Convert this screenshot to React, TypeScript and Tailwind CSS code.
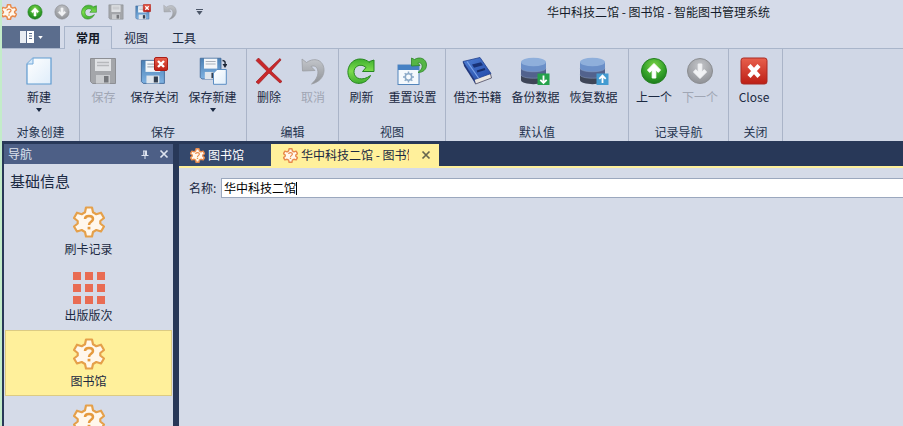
import type { ReactNode } from "react";
import { useState } from "react";

type IconProps = { className?: string };

function Gradients() {
  return (
    <svg className="absolute size-0" aria-hidden="true">
      <defs>
        <radialGradient id="greenBall" cx="0.5" cy="0.3" r="0.7">
          <stop offset="0" stopColor="#7fd447" />
          <stop offset="0.6" stopColor="#35a32a" />
          <stop offset="1" stopColor="#1d7d1c" />
        </radialGradient>
        <radialGradient id="grayBall" cx="0.5" cy="0.3" r="0.7">
          <stop offset="0" stopColor="#c4c6ca" />
          <stop offset="1" stopColor="#8f9196" />
        </radialGradient>
        <linearGradient id="greenArrow" x1="0" y1="0" x2="0" y2="1">
          <stop offset="0" stopColor="#3fb02f" />
          <stop offset="0.5" stopColor="#7cdc4c" />
          <stop offset="1" stopColor="#3fae30" />
        </linearGradient>
        <linearGradient id="redBox" x1="0" y1="0" x2="0" y2="1">
          <stop offset="0" stopColor="#e8604c" />
          <stop offset="1" stopColor="#bd1f16" />
        </linearGradient>
        <linearGradient id="blueDisk" x1="0" y1="0" x2="0" y2="1">
          <stop offset="0" stopColor="#4b80b4" />
          <stop offset="1" stopColor="#7fb2e2" />
        </linearGradient>
        <linearGradient id="paper" x1="0" y1="0" x2="1" y2="1">
          <stop offset="0" stopColor="#ffffff" />
          <stop offset="1" stopColor="#dfedfa" />
        </linearGradient>
        <linearGradient id="undoGray" x1="0" y1="0" x2="0" y2="1">
          <stop offset="0" stopColor="#c3c6cb" />
          <stop offset="1" stopColor="#8f9297" />
        </linearGradient>
        <linearGradient id="bookBlue" x1="0" y1="0" x2="1" y2="1">
          <stop offset="0" stopColor="#4f80d6" />
          <stop offset="1" stopColor="#2348a6" />
        </linearGradient>
      </defs>
    </svg>
  );
}

function Ball({ className, up, muted }: IconProps & { up?: boolean; muted?: boolean }) {
  return (
    <svg viewBox="0 0 28 28" className={className}>
      <circle cx="14" cy="14" r="12.5" fill={muted ? "url(#grayBall)" : "url(#greenBall)"} stroke={muted ? "#8b8d91" : "#23801f"} />
      <path
        d="M14 6.5 L20.5 13 L18.3 15.4 L15.8 13 V21 H12.2 V13 L9.7 15.4 L7.5 13 Z"
        fill={muted ? "#f1f2f4" : "#fff"}
        stroke={muted ? "#f1f2f4" : "#fff"}
        strokeWidth="1"
        strokeLinejoin="round"
        transform={up ? undefined : "rotate(180 14 14)"}
      />
    </svg>
  );
}

function Refresh({ className }: IconProps) {
  return (
    <svg viewBox="0 0 28 28" className={className}>
      <path
        d="M22.5 4.5 L27 3 V14.5 H15.5 L19 10.5 C14 5.8 6.5 9 7 15.5 C7.5 22 15.5 24.5 23.5 18.5 C19.5 27.5 8 29 3 22 C-2.5 13.5 3.5 2 13 2 C17 2 20 3.3 22.5 5.5 Z"
        fill="url(#greenArrow)"
        stroke="#26861f"
        strokeWidth="1"
        strokeLinejoin="round"
      />
    </svg>
  );
}

function DiskShape({ muted }: { muted?: boolean }) {
  return (
    <g>
      <path d="M1.5 1.5 H26.5 V26.5 H3.5 L1.5 24.5 Z" fill={muted ? "#a4a6aa" : "url(#blueDisk)"} stroke={muted ? "#8d8f94" : "#41699a"} />
      <rect x="6" y="2" width="16" height="12" fill={muted ? "#dfe1e4" : "#f3f6f9"} />
      <path d="M8 5.5 H20 M8 8.5 H20" stroke={muted ? "#b6b8bb" : "#a9b1bb"} strokeWidth="1.3" />
      <rect x="7" y="18" width="14" height="8.5" fill={muted ? "#c9cbce" : "#dfe5ec"} />
      <rect x="15" y="19" width="4.5" height="6.5" fill={muted ? "#75777b" : "#333f50"} />
    </g>
  );
}

function Disk({ className, muted }: IconProps & { muted?: boolean }) {
  return (
    <svg viewBox="0 0 28 28" className={className}>
      <DiskShape muted={muted} />
    </svg>
  );
}

function DiskClose({ className }: IconProps) {
  return (
    <svg viewBox="0 0 28 28" className={className}>
      <g transform="translate(0 2) scale(.92)">
        <DiskShape />
      </g>
      <rect x="14.5" y="0.5" width="13" height="13" rx="1.5" fill="url(#redBox)" stroke="#a91d17" />
      <path d="M18 4 L24 10 M24 4 L18 10" stroke="#fff" strokeWidth="2.4" />
    </svg>
  );
}

function DiskNew({ className }: IconProps) {
  return (
    <svg viewBox="0 0 28 28" className={className}>
      <g transform="scale(.83)">
        <DiskShape />
      </g>
      <path d="M18 12.5 H27.3 V27.3 H14.5 V16 Z" fill="url(#paper)" stroke="#5c8ec3" />
      <path d="M23.5 3.5 C26 3.5 26.5 5 26 8" fill="none" stroke="#1d2636" strokeWidth="1.4" />
      <path d="M23.5 7 H28.5 L26 11 Z" fill="#1d2636" />
    </svg>
  );
}

function Paper({ className }: IconProps) {
  return (
    <svg viewBox="0 0 28 28" className={className}>
      <path d="M8 1 H26 V27 H2 V7 Z" fill="url(#paper)" stroke="#5f9bd0" strokeWidth="1.2" />
      <path d="M2 7 H8 V1" fill="#d4e8fa" stroke="#74aadb" />
    </svg>
  );
}

function Undo({ className }: IconProps) {
  return (
    <svg viewBox="0 0 28 28" className={className}>
      <path
        d="M3 2 L7.5 5.5 C17 -1 25.5 4.5 25 14 C24.6 20.5 19.5 25.5 12.5 27 C17.5 22.5 20 17.5 18.5 12.5 C17.3 8.8 14.5 8.5 12 9.5 L16 13.5 L3.5 14 Z"
        fill="url(#undoGray)"
        stroke="#9a9da2"
        strokeWidth="0.8"
        strokeLinejoin="round"
      />
    </svg>
  );
}

function Cross({ className }: IconProps) {
  return (
    <svg viewBox="0 0 28 28" className={className}>
      <path
        d="M3.5 1 L14 11.7 L25 1.5 L26 3 L16 14 L27 24.5 L25 26 L14 16 L3.5 27 L1 25 L11.8 14 L1 3.5 Z"
        fill="#c9272a"
        stroke="#9d1c20"
        strokeWidth="0.7"
        strokeLinejoin="round"
      />
    </svg>
  );
}

function ResetView({ className }: IconProps) {
  return (
    <svg viewBox="0 0 30 28" className={className}>
      <rect x="1" y="8" width="21" height="19.5" fill="#f5f9fd" stroke="#5385bb" />
      <rect x="1" y="8" width="21" height="5" fill="#4681c4" />
      <circle cx="11.5" cy="20" r="3.2" fill="none" stroke="#8ba9c7" strokeWidth="1.5" />
      <path
        d="M11.5 14.5 V16.5 M11.5 23.5 V25.5 M6 20 H8 M15 20 H17 M7.7 16.2 L9 17.5 M14 22.5 L15.3 23.8 M15.3 16.2 L14 17.5 M9 22.5 L7.7 23.8"
        stroke="#8ba9c7"
        strokeWidth="1.5"
      />
      <path
        d="M14.5 1 L17.5 2.5 C23 -1 29.5 2 29.5 8 C29.5 12.5 26 15.5 21 15.5 C25 12.5 26 9.5 24.5 7 C23.5 5.5 22 5.5 20.8 6 L23 8.5 L14.5 9 Z"
        fill="#55b545"
        stroke="#2c8528"
        strokeWidth="0.8"
        strokeLinejoin="round"
      />
    </svg>
  );
}

function Book({ className }: IconProps) {
  return (
    <svg viewBox="0 0 30 28" className={className}>
      <path d="M1 5 L12.5 23.5 L13.5 27 L29.5 21 L28.5 17 Z" fill="#e9e5e1" stroke="#4c4a62" strokeWidth="0.8" />
      <path d="M1 4.5 L18 0.5 L29 16.5 L12.5 22.5 Z" fill="url(#bookBlue)" stroke="#23418d" strokeWidth="0.8" />
      <path d="M1 4.5 L12.5 22.5 L13.5 27 L2 9 Z" fill="#20377e" />
      <path d="M5 4.5 L16.5 21" stroke="#7da4e8" strokeWidth="1.2" />
      <path d="M10 7.5 L19 5.2 L21 8.2 L12 10.7 Z" fill="#193276" />
      <path d="M15 14.5 L23 12" stroke="#162c6b" strokeWidth="2" />
    </svg>
  );
}

function Database({ className, up }: IconProps & { up?: boolean }) {
  return (
    <svg viewBox="0 0 30 28" className={className}>
      <path d="M1 17 V23 C1 28.5 26 28.5 26 23 V17 Z" fill="#3e4557" />
      <path d="M1 11 V17.5 C1 22.5 26 22.5 26 17.5 V11 Z" fill="#52628d" />
      <path d="M1 5 V11 C1 16 26 16 26 11 V5 Z" fill="#6b8fc8" />
      <ellipse cx="13.5" cy="5" rx="12.5" ry="4.3" fill="#8fafdb" />
      <path d="M1 11 C1 16 26 16 26 11 M1 17.5 C1 22.5 26 22.5 26 17.5" fill="none" stroke="#8fa2c4" strokeWidth="0.5" />
      <rect x="17.5" y="16.5" width="12" height="11.5" fill={up ? "#439bd1" : "#25a24b"} />
      <path
        d="M23.5 18.5 V26 M20.3 22.8 L23.5 26 L26.7 22.8"
        fill="none"
        stroke="#fff"
        strokeWidth="1.8"
        transform={up ? "rotate(180 23.5 22.3)" : undefined}
      />
    </svg>
  );
}

function CloseBox({ className }: IconProps) {
  return (
    <svg viewBox="0 0 28 28" className={className}>
      <rect x="1" y="1" width="26" height="26" rx="2.5" fill="url(#redBox)" stroke="#a92922" />
      <path d="M9 8.5 L19 19.5 M19 8.5 L9 19.5" stroke="#fff" strokeWidth="4.2" />
    </svg>
  );
}

function Gear({ className, strong }: IconProps & { strong?: boolean }) {
  return (
    <svg viewBox="0 0 32 32" className={className}>
      <path
        d="M13 1.5 H19 L20 6.3 L23.3 8.2 L28 6.7 L31 12 L27.3 15 V17.5 L31 20.5 L28 25.5 L23.3 24 L20 26 L19 30.5 H13 L12 26 L8.7 24 L4 25.5 L1 20.5 L4.7 17.5 V15 L1 12 L4 6.7 L8.7 8.2 L12 6.3 Z"
        fill="#fff7ec"
        stroke={strong ? "#e88a4c" : "#e5a04a"}
        strokeWidth={strong ? 3 : 2.2}
        strokeLinejoin="round"
      />
      <path d="M12 13 C12 9 20 9 20 13 C20 16 16 15.5 16 19" fill="none" stroke={strong ? "#e88a4c" : "#e59a3e"} strokeWidth="2.5" />
      <rect x="14.6" y="20.8" width="2.8" height="2.6" fill="#e59a3e" />
    </svg>
  );
}

function TileGrid({ className }: IconProps) {
  return (
    <svg viewBox="0 0 32 32" className={className}>
      {[0, 12, 24].map((y) => [0, 12, 24].map((x) => <rect key={`${x}-${y}`} x={x} y={y} width="8" height="8" fill="#e96c53" />))}
    </svg>
  );
}

function Caret({ className }: IconProps) {
  return (
    <svg viewBox="0 0 6 4" className={className}>
      <path d="M0 0 H6 L3 4 Z" fill="currentColor" />
    </svg>
  );
}

function CloseMark({ className }: IconProps) {
  return (
    <svg viewBox="0 0 10 10" className={className}>
      <path d="M1.5 1.5 L8.5 8.5 M8.5 1.5 L1.5 8.5" stroke="currentColor" strokeWidth="1.7" />
    </svg>
  );
}

function Pin({ className }: IconProps) {
  return (
    <svg viewBox="0 0 8 9" className={className}>
      <path d="M2 0.5 H6 V5 H7.5 V6 H0.5 V5 H2 Z M3.5 6 H4.5 V9 H3.5 Z" fill="currentColor" />
      <path d="M3.2 1.5 V5" stroke="#4d5f86" strokeWidth="0.8" />
    </svg>
  );
}

type Action = { label: string; icon: ReactNode; disabled?: boolean; menu?: boolean };

function RibbonButton({ label, icon, disabled, menu }: Action) {
  return (
    <button disabled={disabled} className="flex min-w-[44px] flex-col items-center px-[5px] text-[#1b2942] disabled:text-[#a0a6b4]">
      {icon}
      <span className="mt-[3px] whitespace-nowrap leading-[18px]">{label}</span>
      {menu && <Caret className="mt-[2px] h-[4px] w-[6px]" />}
    </button>
  );
}

function RibbonGroup({ title, width, actions }: { title: string; width: string; actions: Action[] }) {
  return (
    <section aria-label={title} className={`${width} flex shrink-0 flex-col justify-between border-r border-[#aab4c8] pt-2`}>
      <div className="flex justify-center pr-[3px]">
        {actions.map((a) => (
          <RibbonButton key={a.label} {...a} />
        ))}
      </div>
      <h2 className="text-center leading-[18px] text-[#24344f]">{title}</h2>
    </section>
  );
}

const big = "h-7 w-7";
const wide = "h-7 w-[30px]";

const groups: { title: string; width: string; actions: Action[] }[] = [
  { title: "对象创建", width: "w-[78px]", actions: [{ label: "新建", icon: <Paper className={big} />, menu: true }] },
  {
    title: "保存",
    width: "w-[167px]",
    actions: [
      { label: "保存", icon: <Disk muted className={big} />, disabled: true },
      { label: "保存关闭", icon: <DiskClose className={big} /> },
      { label: "保存新建", icon: <DiskNew className={big} />, menu: true },
    ],
  },
  {
    title: "编辑",
    width: "w-[92px]",
    actions: [
      { label: "删除", icon: <Cross className={big} /> },
      { label: "取消", icon: <Undo className={big} />, disabled: true },
    ],
  },
  {
    title: "视图",
    width: "w-[107px]",
    actions: [
      { label: "刷新", icon: <Refresh className={big} /> },
      { label: "重置设置", icon: <ResetView className={wide} /> },
    ],
  },
  {
    title: "默认值",
    width: "w-[183px]",
    actions: [
      { label: "借还书籍", icon: <Book className={wide} /> },
      { label: "备份数据", icon: <Database className={wide} /> },
      { label: "恢复数据", icon: <Database up className={wide} /> },
    ],
  },
  {
    title: "记录导航",
    width: "w-[100px]",
    actions: [
      { label: "上一个", icon: <Ball up className={big} /> },
      { label: "下一个", icon: <Ball muted className={big} />, disabled: true },
    ],
  },
  { title: "关闭", width: "w-[54px]", actions: [{ label: "Close", icon: <CloseBox className={big} /> }] },
];

const navItems = [
  { id: "swipes", label: "刷卡记录", icon: <Gear className="size-8" /> },
  { id: "editions", label: "出版版次", icon: <TileGrid className="size-8" /> },
  { id: "library", label: "图书馆", icon: <Gear className="size-8" />, active: true },
  { id: "more", label: "", icon: <Gear className="size-8" /> },
];

const quick = [
  { name: "上一个", icon: <Ball up className="size-4" /> },
  { name: "下一个", icon: <Ball muted className="size-4" /> },
  { name: "刷新", icon: <Refresh className="size-4" /> },
  { name: "保存", icon: <Disk muted className="size-4" /> },
  { name: "保存关闭", icon: <DiskClose className="size-4" /> },
  { name: "取消", icon: <Undo className="size-4" /> },
];

export default function App() {
  const [name, setName] = useState("华中科技二馆");
  return (
    <div className="flex h-screen overflow-hidden border-l-2 border-[#c3ecc9] bg-[#d5dbe9] font-['Noto_Sans_CJK_SC',sans-serif] text-[12px] text-[#1b2942]">
      <Gradients />
      <div className="flex min-w-0 grow flex-col">
        <header className="flex h-6 shrink-0 items-center">
          <Gear strong className="-ml-px size-4" />
          <div className="ml-[10px] flex gap-[11px]">
            {quick.map((q) => (
              <button key={q.name} aria-label={q.name}>
                {q.icon}
              </button>
            ))}
          </div>
          <button aria-label="自定义" className="ml-[18px] flex flex-col items-center gap-px text-[#4c5668]">
            <span className="h-px w-[7px] bg-current" />
            <Caret className="h-[4px] w-[7px]" />
          </button>
          <h1 className="grow whitespace-nowrap pl-[344px] leading-6 text-[#141a28]">华中科技二馆 - 图书馆 - 智能图书管理系统</h1>
        </header>

        <nav className="flex h-[25px] shrink-0 items-end border-b border-[#a9b5ca]">
          <button aria-label="文件" className="flex h-[22px] w-[58px] items-center justify-center gap-1 bg-[#5b6d8d] text-white">
            <svg viewBox="0 0 14 12" className="h-3 w-[14px]">
              <rect width="6" height="12" fill="#e9edf3" />
              <rect x="7" width="7" height="12" fill="#fff" />
              <path d="M9 2.5 H12 M9 5 H12 M9 7.5 H12" stroke="#5b6d8d" />
            </svg>
            <Caret className="h-[3px] w-[5px]" />
          </button>
          <button className="-mb-px ml-1 h-[23px] w-[48px] border border-b-0 border-[#a9b5ca] bg-[#d1d8e7] font-bold leading-[22px] text-[#141a28]">常用</button>
          <button className="h-[22px] w-[48px] leading-6">视图</button>
          <button className="h-[22px] w-[48px] leading-6">工具</button>
        </nav>

        <div className="flex h-[92px] shrink-0 bg-[#d0d7e6]">
          {groups.map((g) => (
            <RibbonGroup key={g.title} {...g} />
          ))}
        </div>

        <div className="flex min-h-0 grow bg-[#283858] pt-[3px]">
          <aside className="ml-[2px] flex w-[169px] shrink-0 flex-col overflow-hidden bg-[#d5dbe8]">
            <div className="flex h-5 shrink-0 items-center bg-[#4d5f86] px-1 text-[#dde3ef]">
              <h2 className="grow leading-5">导航</h2>
              <button aria-label="固定">
                <Pin className="h-[9px] w-2" />
              </button>
              <button aria-label="关闭导航" className="ml-[10px]">
                <CloseMark className="size-[10px]" />
              </button>
            </div>
            <h3 className="h-[34px] shrink-0 px-[6px] text-[15px] leading-[34px]">基础信息</h3>
            {navItems.map((item) => (
              <button
                key={item.id}
                className={`mx-px flex h-[66px] shrink-0 flex-col items-center border pt-[7px] ${
                  item.active ? "border-[#dccb83] bg-[#fff09b]" : "border-transparent"
                }`}
              >
                {item.icon}
                <span className="mt-[2px] leading-[18px]">{item.label}</span>
              </button>
            ))}
          </aside>

          <main className="ml-[6px] flex min-w-0 grow flex-col">
            <div role="tablist" className="flex h-6 shrink-0 border-b-2 border-[#fff09b]">
              <button role="tab" aria-selected="false" className="flex w-[92px] items-center gap-[3px] bg-[#34486c] pl-[11px] text-white">
                <Gear strong className="size-[15px]" />
                图书馆
              </button>
              <div className="flex w-[168px] items-center bg-[#fff09b] pl-3">
                <button role="tab" aria-selected="true" className="flex min-w-0 items-center gap-[3px]">
                  <Gear strong className="size-[15px] shrink-0" />
                  <span className="w-[108px] overflow-hidden whitespace-nowrap text-left leading-[22px]">华中科技二馆 - 图书馆</span>
                </button>
                <button aria-label="关闭标签" className="ml-3 text-[#66664f]">
                  <CloseMark className="size-[10px]" />
                </button>
              </div>
            </div>
            <div className="grow bg-[#d5dbe8] pl-[10px] pt-[10px]">
              <div className="flex h-5 items-center">
                <label htmlFor="name" className="w-8 shrink-0 whitespace-nowrap">
                  名称:
                </label>
                <div className="flex h-5 min-w-0 grow items-center border border-r-0 border-[#9ba8be] bg-white pl-[2px]">
                  <input
                    id="name"
                    value={name}
                    onChange={(e) => setName(e.target.value)}
                    className="field-sizing-content leading-[18px] text-black caret-black outline-none"
                  />
                  <span className="h-[13px] w-px bg-black" />
                </div>
              </div>
            </div>
          </main>
        </div>
      </div>
    </div>
  );
}
